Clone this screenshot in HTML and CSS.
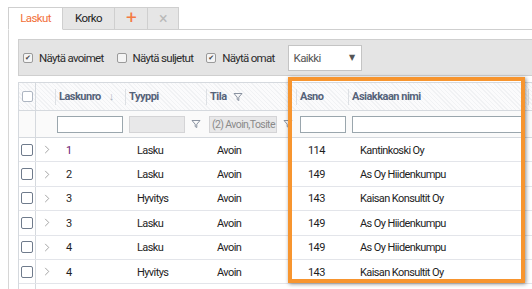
FILE: index.html
```html
<!DOCTYPE html>
<html lang="fi">
<head>
    <meta charset="UTF-8">
    <title>Laskut</title>
    <link rel="stylesheet" href="styles.css">
</head>
<body>
    <div class="tabs">
        <div class="tab active">Laskut</div>
        <div class="tab">Korko</div>
        <div class="tab tab-add">+</div>
        <div class="tab tab-close">&times;</div>
        <div class="tab-rest"></div>
    </div>

    <div class="panel">
        <div class="toolbar">
            <label class="check"><span class="box checked">&#10004;</span>Näytä avoimet</label>
            <label class="check"><span class="box"></span>Näytä suljetut</label>
            <label class="check"><span class="box checked">&#10004;</span>Näytä omat</label>
            <div class="select">Kaikki<span class="caret">&#9660;</span></div>
        </div>

        <div class="grid">
            <div class="row head">
                <div class="cell cb"><span class="rbox light"></span></div>
                <div class="cell exp"></div>
                <div class="cell hd sep">Laskunro <span class="sort">&#8595;</span></div>
                <div class="cell hd sep">Tyyppi</div>
                <div class="cell hd sep">Tila <svg class="funnel" viewBox="0 0 10 10"><path d="M1 1.5h8L5.8 5.2v3.3L4.2 7.6V5.2z"/></svg></div>
                <div class="cell hd sep">Asno</div>
                <div class="cell hd sep">Asiakkaan nimi</div>
                <div class="cell hd sep">Summa</div>
            </div>
            <div class="row filter">
                <div class="cell cb"></div>
                <div class="cell exp"></div>
                <div class="cell"><span class="input w66"></span></div>
                <div class="cell"><span class="input grey w56"></span><svg class="funnel" viewBox="0 0 10 10"><path d="M1 1.5h8L5.8 5.2v3.3L4.2 7.6V5.2z"/></svg></div>
                <div class="cell"><span class="input grey w68">(2) Avoin,Tosite</span><svg class="funnel" viewBox="0 0 10 10"><path d="M1 1.5h8L5.8 5.2v3.3L4.2 7.6V5.2z"/></svg></div>
                <div class="cell"><span class="input w46"></span></div>
                <div class="cell"><span class="input w172"></span></div>
                <div class="cell"><span class="input w90"></span></div>
            </div>

            <div class="row data">
                <div class="cell cb"><span class="rbox"></span></div>
                <div class="cell exp"><svg class="chev" viewBox="0 0 6 10"><path d="M1 1l4 4-4 4"/></svg></div>
                <div class="cell val visited">1</div>
                <div class="cell val">Lasku</div>
                <div class="cell val">Avoin</div>
                <div class="cell val">114</div>
                <div class="cell val">Kantinkoski Oy</div>
                <div class="cell val"></div>
            </div>
            <div class="row data">
                <div class="cell cb"><span class="rbox"></span></div>
                <div class="cell exp"><svg class="chev" viewBox="0 0 6 10"><path d="M1 1l4 4-4 4"/></svg></div>
                <div class="cell val">2</div>
                <div class="cell val">Lasku</div>
                <div class="cell val">Avoin</div>
                <div class="cell val">149</div>
                <div class="cell val">As Oy Hiidenkumpu</div>
                <div class="cell val"></div>
            </div>
            <div class="row data">
                <div class="cell cb"><span class="rbox"></span></div>
                <div class="cell exp"><svg class="chev" viewBox="0 0 6 10"><path d="M1 1l4 4-4 4"/></svg></div>
                <div class="cell val">3</div>
                <div class="cell val">Hyvitys</div>
                <div class="cell val">Avoin</div>
                <div class="cell val">143</div>
                <div class="cell val">Kaisan Konsultit Oy</div>
                <div class="cell val"></div>
            </div>
            <div class="row data">
                <div class="cell cb"><span class="rbox"></span></div>
                <div class="cell exp"><svg class="chev" viewBox="0 0 6 10"><path d="M1 1l4 4-4 4"/></svg></div>
                <div class="cell val">3</div>
                <div class="cell val">Lasku</div>
                <div class="cell val">Avoin</div>
                <div class="cell val">149</div>
                <div class="cell val">As Oy Hiidenkumpu</div>
                <div class="cell val"></div>
            </div>
            <div class="row data">
                <div class="cell cb"><span class="rbox"></span></div>
                <div class="cell exp"><svg class="chev" viewBox="0 0 6 10"><path d="M1 1l4 4-4 4"/></svg></div>
                <div class="cell val">4</div>
                <div class="cell val">Lasku</div>
                <div class="cell val">Avoin</div>
                <div class="cell val">149</div>
                <div class="cell val">As Oy Hiidenkumpu</div>
                <div class="cell val"></div>
            </div>
            <div class="row data">
                <div class="cell cb"><span class="rbox"></span></div>
                <div class="cell exp"><svg class="chev" viewBox="0 0 6 10"><path d="M1 1l4 4-4 4"/></svg></div>
                <div class="cell val">4</div>
                <div class="cell val">Hyvitys</div>
                <div class="cell val">Avoin</div>
                <div class="cell val">143</div>
                <div class="cell val">Kaisan Konsultit Oy</div>
                <div class="cell val"></div>
            </div>
            <div class="row data">
                <div class="cell cb"></div>
                <div class="cell exp"></div>
            </div>
        </div>
    </div>

    <div class="highlight"></div>
</body>
</html>
```

FILE: styles.css
```css
html, body {
    margin: 0;
    padding: 0;
    width: 532px;
    height: 289px;
    overflow: hidden;
    background-color: #fff;
    font-family: Roboto, 'Liberation Sans', Arial, sans-serif;
    font-size: 11px;
    letter-spacing: -0.6px;
    color: #222;
}

body {
    position: relative;
    padding-top: 7px;
    padding-left: 8px;
    box-sizing: border-box;
}

/* tabs */
.tabs {
    display: flex;
    height: 23px;
}

.tab {
    box-sizing: border-box;
    height: 23px;
    line-height: 21px;
    font-size: 11.5px;
    text-align: center;
    background-color: #e6e6e6;
    border: 1px solid #cfcfcf;
    border-left: none;
    color: #222;
}

    .tab.active {
        width: 55px;
        background-color: #fff;
        border-left: 1px solid #cfcfcf;
        border-bottom-color: #fff;
        color: #f26f3a;
    }

    .tab:nth-child(2) {
        width: 52px;
    }

.tab-add {
    width: 33px;
    font-size: 19px;
    line-height: 19px;
    color: #f47a43;
}

.tab-close {
    width: 31px;
    font-size: 16px;
    color: #b9b9b9;
}

.tab-rest {
    flex: 1;
    border-bottom: 1px solid #cfcfcf;
}

.panel {
    border-left: 1px solid #d6d6d6;
    padding: 9px 0 0 9px;
    height: 300px;
}

/* toolbar */
.toolbar {
    display: flex;
    align-items: center;
    height: 37px;
    box-sizing: border-box;
    background-color: #e4e4e4;
    border: 1px solid #cfcfcf;
    border-right: none;
    padding-left: 4px;
}

.check {
    display: flex;
    align-items: center;
    margin-right: 13px;
    color: #2b2b2b;
    font-size: 11.5px;
    letter-spacing: -0.7px;
}

.box {
    box-sizing: border-box;
    width: 10px;
    height: 10px;
    margin-right: 6px;
    border: 1px solid #9a9a9a;
    border-radius: 2px;
    background-color: #f4f4f4;
    font-family: 'DejaVu Sans', sans-serif;
    font-size: 7px;
    line-height: 8px;
    letter-spacing: 0;
    text-align: center;
    color: #444;
}

.select {
    box-sizing: border-box;
    width: 74px;
    height: 26px;
    padding-left: 5px;
    line-height: 24px;
    font-size: 11.5px;
    background-color: #fff;
    border: 1px solid #c4c4c4;
    color: #555;
}

.caret {
    float: right;
    margin-right: 6px;
    font-family: 'DejaVu Sans', sans-serif;
    font-size: 8px;
    color: #555;
}

/* grid */
.grid {
    margin-top: 6px;
    border-top: 1px solid #d5d9de;
    border-left: 1px solid #d5d9de;
}

.row {
    display: grid;
    grid-template-columns: 17px 19px 70px 81px 90px 52px 180px 100px;
    border-bottom: 1px solid #e3e5ea;
}

.cell {
    display: flex;
    align-items: center;
    min-width: 0;
    white-space: nowrap;
    overflow: hidden;
}

.cb {
    border-right: 1px solid #d5d9de;
    justify-content: center;
}

.head {
    height: 27px;
    background: repeating-linear-gradient(45deg, #f1f2f4 0 1px, #fbfbfc 1px 3px);
    border-bottom-color: #d5d9de;
}

.hd {
    padding-left: 3px;
    font-weight: bold;
    letter-spacing: -0.5px;
    color: #56637a;
}

    .hd.sep {
        border-left: 1px solid #dde0e4;
        height: 16px;
        align-self: center;
    }

    .hd:last-child {
        color: #b86d2b;
    }

.sort {
    margin-left: 8px;
    color: #a9b0ba;
    font-weight: normal;
}

.funnel {
    flex: none;
    width: 10px;
    height: 10px;
    margin-left: 6px;
    fill: none;
    stroke: #7d8796;
    stroke-width: 0.9;
}

.filter {
    height: 26px;
    background-color: #fafafa;
    border-bottom-color: #d5d9de;
}

    .filter .cell {
        padding-left: 4px;
    }

    .filter .cb,
    .filter .exp {
        padding-left: 0;
    }

    .filter .cell:nth-child(3) {
        padding-left: 2px;
    }

    .filter .cell:nth-child(5) {
        padding-left: 3px;
    }

.input {
    flex: none;
    box-sizing: border-box;
    height: 17px;
    border: 1px solid #9aa6ad;
    background-color: #fff;
    font-size: 10.5px;
    line-height: 15px;
    color: #8a8a8a;
    overflow: hidden;
    white-space: nowrap;
}

    .input.grey {
        background-color: #e8e8e9;
        border-color: #d4d4d6;
        padding-left: 2px;
    }

.w66 { width: 66px; }
.w56 { width: 56px; }
.w68 { width: 68px; }
.w46 { width: 46px; }
.w172 { width: 172px; }
.w90 { width: 90px; }

.data {
    height: 23.4px;
    background-color: #fff;
}

.rbox {
    box-sizing: border-box;
    width: 12px;
    height: 12px;
    border: 1px solid #6f7b8c;
    border-radius: 2px;
    background-color: #fff;
}

    .rbox.light {
        width: 11px;
        height: 11px;
        border-color: #aeb6c2;
    }

.exp {
    justify-content: center;
}

.chev {
    width: 6px;
    height: 9px;
    margin-left: 2px;
    fill: none;
    stroke: #9a9a9a;
    stroke-width: 1;
}

.val {
    padding-left: 12px;
    padding-top: 1px;
    color: #1e1e1e;
}

    .val:nth-child(3),
    .val:nth-child(5) {
        padding-left: 11px;
    }

    .val.visited {
        color: #6a1b6f;
    }

/* highlight overlay */
.highlight {
    position: absolute;
    left: 288px;
    top: 77px;
    width: 237px;
    height: 206px;
    box-sizing: border-box;
    border: 4px solid #f7952f;
    box-shadow: 1px 1px 4px rgba(0, 0, 0, 0.45);
}
```
